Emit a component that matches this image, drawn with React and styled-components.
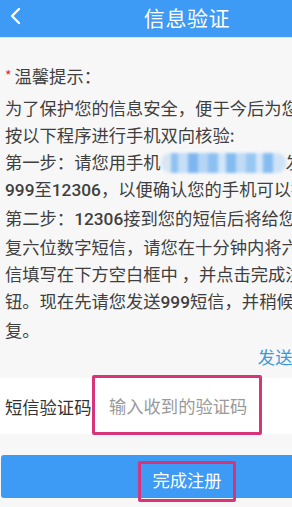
import React from 'react';
import styled, { createGlobalStyle } from 'styled-components';

const GlobalStyle = createGlobalStyle`
  html, body {
    margin: 0;
    padding: 0;
    background: #f7f7f7;
    overflow: hidden;
  }
  body {
    font-family: "Noto Sans CJK SC", "Noto Sans", sans-serif;
  }
`;

const Page = styled.div`
  width: 374px;
  min-height: 507px;
  background: #f7f7f7;
`;

const Header = styled.div`
  position: relative;
  height: 37px;
  background: #3d9af5;
  border-bottom: 1px solid #d6e8f8;
  display: flex;
  align-items: center;
  justify-content: center;
`;

const Back = styled.div`
  position: absolute;
  left: 9px;
  top: 7px;
  width: 14px;
  height: 18px;
  display: flex;
`;

const Title = styled.div`
  color: #ffffff;
  font-size: 21px;
  letter-spacing: 0.6px;
  margin-top: -4px;
`;

const Tips = styled.div`
  padding: 24px 0 0 5px;
  color: #3f3f3f;
  font-size: 17.3px;
`;

const TipTitle = styled.div`
  line-height: 27px;
  margin-bottom: 5px;
  white-space: nowrap;
`;

const Star = styled.span`
  color: #e3262a;
  font-size: 14px;
  margin-right: 3px;
  vertical-align: 2px;
`;

const Line = styled.div`
  line-height: 27px;
  white-space: nowrap;
`;

const Num = styled.span`
  font-family: Roboto, "Noto Sans", sans-serif;
  font-weight: 500;
`;

const Masked = styled.span`
  display: inline-block;
  width: 125px;
  height: 20px;
  vertical-align: -4px;
  border-radius: 9px;
  background:
    linear-gradient(90deg,
      #d8e6f4 0 8%, #8fc2f2 8% 14%, #c6def7 14% 22%, #7db6ef 22% 30%,
      #b5d5f6 30% 38%, #8cc0f1 38% 46%, #d2e5f8 46% 52%, #84bcf1 52% 60%,
      #c0dbf6 60% 68%, #98c7f3 68% 76%, #d4e6f8 76% 82%, #86bdf0 82% 90%,
      #cfe3f7 90% 100%);
  filter: blur(1.4px);
`;

const SendRow = styled.div`
  display: flex;
  justify-content: flex-end;
  padding-right: 47px;
  line-height: 27px;
`;

const SendLink = styled.span`
  color: #3c9ad8;
  font-size: 17.3px;
`;

const CodeRow = styled.div`
  margin-top: 8px;
  height: 56px;
  background: #ffffff;
  display: flex;
  align-items: center;
`;

const CodeLabel = styled.div`
  width: 87px;
  padding-left: 5px;
  color: #333333;
  font-size: 17.3px;
  white-space: nowrap;
`;

const CodeInput = styled.input`
  box-sizing: border-box;
  width: 170px;
  height: 60px;
  margin: -3px 0 -1px;
  padding: 0 0 0 14px;
  border: 3px solid #d8347a;
  border-radius: 2px;
  background: #ffffff;
  outline: none;
  font-family: "Noto Sans CJK SC", "Noto Sans", sans-serif;
  font-size: 17.3px;
  color: #333333;
  &::placeholder {
    color: #9a9a9a;
  }
`;

const SubmitButton = styled.button`
  box-sizing: border-box;
  margin: 21px 0 0 1px;
  width: 373px;
  height: 43px;
  border: none;
  border-radius: 3px;
  background: #3d9af5;
  display: flex;
  justify-content: center;
  align-items: flex-start;
  padding: 6px 0 0;
  cursor: pointer;
`;

const SubmitText = styled.span`
  box-sizing: border-box;
  width: 98px;
  height: 41px;
  border: 3px solid #d8347a;
  border-radius: 2px;
  display: flex;
  align-items: center;
  justify-content: center;
  padding-bottom: 5px;
  color: #ffffff;
  font-family: "Noto Sans CJK SC", "Noto Sans", sans-serif;
  font-size: 17.3px;
  margin-left: -1px;
`;

export default function App() {
  return (
    <>
      <GlobalStyle />
      <Page>
        <Header>
          <Back>
            <svg width="14" height="18" viewBox="0 0 14 18">
              <polyline points="10,2 3,9 10,16" fill="none" stroke="#ffffff" strokeWidth="2.4" strokeLinecap="round" strokeLinejoin="round" />
            </svg>
          </Back>
          <Title>信息验证</Title>
        </Header>
        <Tips>
          <TipTitle><Star>*</Star>温馨提示：</TipTitle>
          <Line>为了保护您的信息安全，便于今后为您提供服务，请</Line>
          <Line>按以下程序进行手机双向核验:</Line>
          <Line>第一步：请您用手机<Masked />发送</Line>
          <Line><Num>999</Num>至<Num>12306</Num>，以便确认您的手机可以接收短信。</Line>
          <Line>第二步：<Num>12306</Num>接到您的短信后将给您回</Line>
          <Line>复六位数字短信，请您在十分钟内将六位短</Line>
          <Line>信填写在下方空白框中 ，并点击完成注册按</Line>
          <Line>钮。现在先请您发送<Num>999</Num>短信，并稍候回</Line>
          <Line>复。</Line>
          <SendRow><SendLink>发送短信</SendLink></SendRow>
        </Tips>
        <CodeRow>
          <CodeLabel>短信验证码</CodeLabel>
          <CodeInput placeholder="输入收到的验证码" />
        </CodeRow>
        <SubmitButton>
          <SubmitText>完成注册</SubmitText>
        </SubmitButton>
      </Page>
    </>
  );
}
